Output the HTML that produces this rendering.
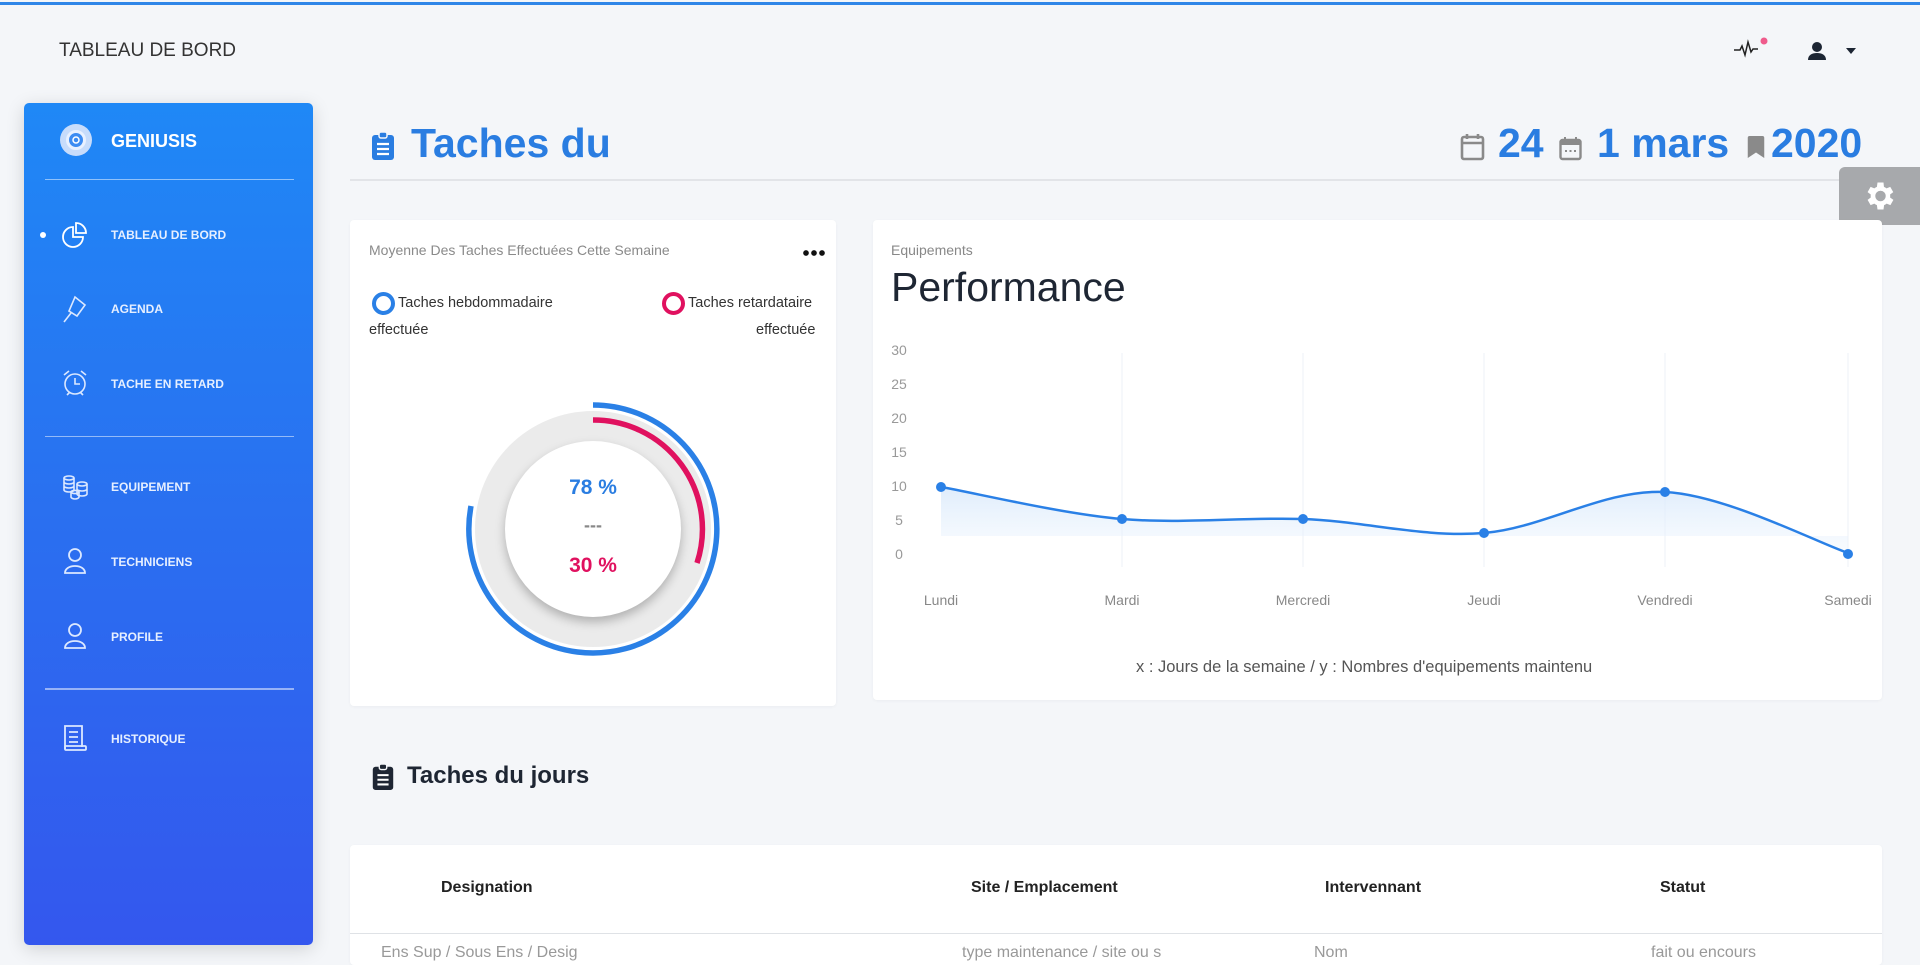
<!DOCTYPE html>
<html><head><meta charset="utf-8">
<style>
*{margin:0;padding:0;box-sizing:border-box}
body{width:1920px;height:955px;overflow:hidden;background:#f4f6f9;font-family:"Liberation Sans",Arial,sans-serif;position:relative}
.a{position:absolute}
.topline{left:0;top:2px;width:1920px;height:3px;background:#2f86e8}
.side{left:24px;top:103px;width:289px;height:842px;border-radius:5px;background:linear-gradient(180deg,#1f88f6 0%,#2a6ff0 50%,#3457ee 100%);box-shadow:0 4px 18px rgba(0,0,0,.15)}
.nav{color:#e6efff;font-size:12px;font-weight:bold;left:111px}
.div{left:45px;width:249px;height:1px;background:rgba(255,255,255,.5)}
.card{background:#fff;border-radius:4px;box-shadow:0 1px 3px rgba(0,0,0,.04)}
.big{font-weight:bold;color:#2a7de1;font-size:41px}
.xl{font-size:14px;color:#888;transform:translateX(-50%)}
.yl{font-size:14px;color:#999;left:889px;width:20px;text-align:center}
.th{font-size:16px;font-weight:bold;color:#222;top:879px}
.td{font-size:16px;color:#999;top:944px}
</style></head><body>
<div class="a topline"></div>
<div class="a" style="left:59px;top:40px;font-size:19px;color:#333">TABLEAU DE BORD</div>
<svg class="a" style="left:1733px;top:36px" width="36" height="24" viewBox="0 0 36 24"><path d="M1 14h6l2-4 3 9 3-13 3 10 2-3h5" fill="none" stroke="#222" stroke-width="1.5"/><circle cx="31" cy="5" r="3.5" fill="#ef5b8c"/></svg>
<svg class="a" style="left:1806px;top:40px" width="22" height="22" viewBox="0 0 22 22"><circle cx="11" cy="7" r="5" fill="#1c2533"/><path d="M2 20c0-5 4-7 9-7s9 2 9 7z" fill="#1c2533"/></svg>
<svg class="a" style="left:1846px;top:48px" width="10" height="6"><path d="M0 0h10L5 6z" fill="#1c2533"/></svg>

<div class="a side"></div>
<div class="a" style="left:60px;top:124px;width:32px;height:32px;border-radius:50%;background:#c7dcfb"></div>
<div class="a" style="left:66px;top:130px;width:20px;height:20px;border-radius:50%;background:#3d8cf2;border:3px solid #e9f1ff"></div>
<svg class="a" style="left:71px;top:135px" width="10" height="10" viewBox="0 0 10 10"><circle cx="5" cy="5" r="3" fill="none" stroke="#fff" stroke-width="1.5"/></svg>
<div class="a" style="left:111px;top:131px;color:#fff;font-size:18px;font-weight:bold">GENIUSIS</div>
<div class="a div" style="top:179px"></div>
<div class="a" style="left:40px;top:232px;width:6px;height:6px;border-radius:50%;background:#fff"></div>
<svg class="a" style="left:61px;top:221px" width="28" height="28" viewBox="0 0 28 28" fill="none" stroke="#fff" stroke-width="1.8"><path d="M12 6a10 10 0 1 0 10 10H12z"/><path d="M15 2v10h10A10 10 0 0 0 15 2z"/></svg>
<div class="a nav" style="top:228px">TABLEAU DE BORD</div>
<svg class="a" style="left:61px;top:294px" width="28" height="30" viewBox="0 0 28 30" fill="none" stroke="#dbe8ff" stroke-width="1.6"><path d="M14 3l10 8-8 11-8-5z"/><path d="M10 19L3 28"/></svg>
<div class="a nav" style="top:302px">AGENDA</div>
<svg class="a" style="left:61px;top:368px" width="28" height="30" viewBox="0 0 28 30" fill="none" stroke="#dbe8ff" stroke-width="1.6"><circle cx="14" cy="16" r="10"/><path d="M14 10v6h5M3 7l5-4M25 7l-5-4M6 27l3-3M22 27l-3-3"/></svg>
<div class="a nav" style="top:377px">TACHE EN RETARD</div>
<div class="a div" style="top:436px"></div>
<svg class="a" style="left:61px;top:474px" width="28" height="26" viewBox="0 0 28 26" fill="none" stroke="#dbe8ff" stroke-width="1.6"><ellipse cx="8" cy="4" rx="5" ry="2"/><path d="M3 4v12c0 1 2 2 5 2s5-1 5-2V4M3 8c0 1 2 2 5 2s5-1 5-2M3 12c0 1 2 2 5 2s5-1 5-2"/><ellipse cx="21" cy="10" rx="5" ry="2"/><path d="M16 10v10c0 1 2 2 5 2s5-1 5-2V10M16 15c0 1 2 2 5 2s5-1 5-2"/><ellipse cx="14" cy="18" rx="4" ry="1.6"/><path d="M10 18v5c0 1 2 2 4 2s4-1 4-2v-5"/></svg>
<div class="a nav" style="top:480px">EQUIPEMENT</div>
<svg class="a" style="left:63px;top:547px" width="24" height="28" viewBox="0 0 24 28" fill="none" stroke="#dbe8ff" stroke-width="1.8"><circle cx="12" cy="8" r="6"/><path d="M2 26c0-4 4-7 10-7s10 3 10 7z"/></svg>
<div class="a nav" style="top:555px">TECHNICIENS</div>
<svg class="a" style="left:63px;top:622px" width="24" height="28" viewBox="0 0 24 28" fill="none" stroke="#dbe8ff" stroke-width="1.8"><circle cx="12" cy="8" r="6"/><path d="M2 26c0-4 4-7 10-7s10 3 10 7z"/></svg>
<div class="a nav" style="top:630px">PROFILE</div>
<div class="a div" style="top:688px;height:2px"></div>
<svg class="a" style="left:62px;top:724px" width="26" height="28" viewBox="0 0 26 28" fill="none" stroke="#dbe8ff" stroke-width="1.8"><path d="M3 25V2h17v21"/><path d="M7 8h9M7 13h9M7 18h9"/><rect x="3" y="22" width="21" height="4" rx="1"/></svg>
<div class="a nav" style="top:732px">HISTORIQUE</div>

<svg class="a" style="left:372px;top:132px" width="22" height="28" viewBox="0 0 22 28"><rect x="0" y="3" width="22" height="25" rx="3" fill="#2a7de1"/><rect x="7" y="0" width="8" height="6" rx="2" fill="#2a7de1" stroke="#f4f6f9" stroke-width="1.5"/><path d="M5 12h12M5 17h12M5 22h12" stroke="#fff" stroke-width="2.2"/></svg>
<div class="a big" style="left:411px;top:120px">Taches du</div>
<div class="a" style="left:350px;top:179px;width:1570px;height:2px;background:#e2e4e8"></div>
<svg class="a" style="left:1460px;top:132px" width="25" height="29" viewBox="0 0 25 29" fill="none" stroke="#8a8a8a" stroke-width="2.6"><rect x="2" y="5" width="21" height="22" rx="2"/><path d="M2 11h21M7 2v5M18 2v5"/></svg>
<div class="a big" style="left:1498px;top:120px">24</div>
<svg class="a" style="left:1559px;top:136px" width="23" height="25" viewBox="0 0 23 25"><rect x="1.5" y="4" width="20" height="19" rx="2" fill="none" stroke="#8a8a8a" stroke-width="2.4"/><rect x="1.5" y="4" width="20" height="5" fill="#8a8a8a"/><path d="M6 1v5M17 1v5" stroke="#8a8a8a" stroke-width="2"/><path d="M6 15h2M10.5 15h2M15 15h2" stroke="#8a8a8a" stroke-width="2"/></svg>
<div class="a big" style="left:1597px;top:120px">1 mars</div>
<svg class="a" style="left:1747px;top:136px" width="18" height="22" viewBox="0 0 18 24"><path d="M0 2q0-2 2-2h14q2 0 2 2v22l-9-6-9 6z" fill="#8a8a8a"/></svg>
<div class="a big" style="left:1771px;top:120px">2020</div>
<div class="a" style="left:1839px;top:167px;width:81px;height:58px;background:#a7a9ac;border-radius:6px 0 0 6px"></div>
<svg class="a" style="left:1861px;top:178px" width="36" height="36" viewBox="0 0 24 24"><path fill="#fff" d="M19.4 13a7.5 7.5 0 0 0 0-2l2.1-1.6-2-3.5-2.5 1a7 7 0 0 0-1.7-1L15 3h-4l-.4 2.9a7 7 0 0 0-1.7 1l-2.5-1-2 3.5L6.5 11a7.5 7.5 0 0 0 0 2l-2.1 1.6 2 3.5 2.5-1a7 7 0 0 0 1.7 1L11 21h4l.4-2.9a7 7 0 0 0 1.7-1l2.5 1 2-3.5zM13 15.5a3.5 3.5 0 1 1 0-7 3.5 3.5 0 0 1 0 7z"/></svg>

<div class="a card" style="left:350px;top:220px;width:486px;height:486px"></div>
<div class="a" style="left:369px;top:242px;font-size:14px;color:#8a8a8a">Moyenne Des Taches Effectuées Cette Semaine</div>
<div class="a" style="left:803px;top:250px;width:22px;height:6px;background:radial-gradient(circle at 3px 3px,#111 2.6px,transparent 3px) 0 0/8px 6px repeat-x"></div>
<div class="a" style="left:372px;top:292px;width:23px;height:23px;border-radius:50%;border:4.5px solid #2a80e6"></div>
<div class="a" style="left:398px;top:295px;font-size:14.5px;color:#333">Taches hebdommadaire</div>
<div class="a" style="left:369px;top:322px;font-size:14.5px;color:#333">effectuée</div>
<div class="a" style="left:662px;top:292px;width:23px;height:23px;border-radius:50%;border:4.5px solid #e0115f"></div>
<div class="a" style="left:688px;top:295px;font-size:14.5px;color:#333">Taches retardataire</div>
<div class="a" style="left:756px;top:322px;font-size:14.5px;color:#333">effectuée</div>
<div class="a" style="left:475px;top:411px;width:236px;height:236px;border-radius:50%;background:#ebebeb"></div>
<div class="a" style="left:505px;top:441px;width:176px;height:176px;border-radius:50%;background:#fff;box-shadow:0 5px 10px rgba(0,0,0,.25)"></div>
<svg class="a" style="left:0;top:0" width="900" height="700" fill="none">
<path d="M593 405A124 124 0 1 1 471 506" stroke="#2a80e6" stroke-width="5.5"/>
<path d="M593 420A109 109 0 0 1 697 563" stroke="#e0115f" stroke-width="5.5"/>
</svg>
<div class="a" style="left:543px;top:476px;width:100px;text-align:center;font-size:21px;font-weight:bold;color:#2a7de1">78 %</div>
<div class="a" style="left:543px;top:515px;width:100px;text-align:center;font-size:18px;font-weight:bold;color:#888">---</div>
<div class="a" style="left:543px;top:554px;width:100px;text-align:center;font-size:21px;font-weight:bold;color:#e0115f">30 %</div>

<div class="a card" style="left:873px;top:220px;width:1009px;height:480px"></div>
<div class="a" style="left:891px;top:242px;font-size:14px;color:#888">Equipements</div>
<div class="a" style="left:891px;top:264px;font-size:41px;color:#1e2633">Performance</div>
<div class="a yl" style="top:342px">30</div>
<div class="a yl" style="top:376px">25</div>
<div class="a yl" style="top:410px">20</div>
<div class="a yl" style="top:444px">15</div>
<div class="a yl" style="top:478px">10</div>
<div class="a yl" style="top:512px">5</div>
<div class="a yl" style="top:546px">0</div>
<svg class="a" style="left:0;top:0" width="1920" height="700">
<defs><linearGradient id="g" x1="0" y1="0" x2="0" y2="1"><stop offset="0" stop-color="#d7e8fb" stop-opacity=".8"/><stop offset="1" stop-color="#eef5fd" stop-opacity=".4"/></linearGradient></defs>
<g stroke="#edf1f7" stroke-width="1"><path d="M1122 353V567M1303 353V567M1484 353V567M1665 353V567M1848 353V567"/></g>
<path d="M941 487C971 492 1062 514 1122 519C1182 524 1243 517 1303 519C1363 521 1424 538 1484 533C1544 528 1604 489 1665 492C1726 495 1818 543 1848 553V536H941Z" fill="url(#g)"/>
<path d="M941 487C971 492 1062 514 1122 519C1182 524 1243 517 1303 519C1363 521 1424 538 1484 533C1544 528 1604 489 1665 492C1726 495 1818 543 1848 553" fill="none" stroke="#2a80e6" stroke-width="2.5"/>
<g fill="#2a80e6"><circle cx="941" cy="487" r="5"/><circle cx="1122" cy="519" r="5"/><circle cx="1303" cy="519" r="5"/><circle cx="1484" cy="533" r="5"/><circle cx="1665" cy="492" r="5"/><circle cx="1848" cy="554" r="5"/></g>
</svg>
<div class="a xl" style="left:941px;top:592px">Lundi</div>
<div class="a xl" style="left:1122px;top:592px">Mardi</div>
<div class="a xl" style="left:1303px;top:592px">Mercredi</div>
<div class="a xl" style="left:1484px;top:592px">Jeudi</div>
<div class="a xl" style="left:1665px;top:592px">Vendredi</div>
<div class="a xl" style="left:1848px;top:592px">Samedi</div>
<div class="a" style="left:1136px;top:658px;font-size:16.5px;color:#555">x : Jours de la semaine / y : Nombres d'equipements maintenu</div>

<svg class="a" style="left:372px;top:764px" width="22" height="26" viewBox="0 0 22 28"><rect x="0" y="3" width="22" height="25" rx="3" fill="#1e2633"/><rect x="7" y="0" width="8" height="6" rx="2" fill="#1e2633" stroke="#f4f6f9" stroke-width="1.5"/><path d="M5 12h12M5 17h12M5 22h12" stroke="#fff" stroke-width="2.2"/></svg>
<div class="a" style="left:407px;top:762px;font-size:24px;font-weight:bold;color:#1e2633">Taches du jours</div>
<div class="a card" style="left:350px;top:845px;width:1532px;height:120px"></div>
<div class="a th" style="left:441px">Designation</div>
<div class="a th" style="left:971px">Site / Emplacement</div>
<div class="a th" style="left:1325px">Intervennant</div>
<div class="a th" style="left:1660px">Statut</div>
<div class="a" style="left:350px;top:933px;width:1532px;height:1px;background:#dfe2e6"></div>
<div class="a td" style="left:381px">Ens Sup / Sous Ens / Desig</div>
<div class="a td" style="left:962px">type maintenance / site ou s</div>
<div class="a td" style="left:1314px">Nom</div>
<div class="a td" style="left:1651px">fait ou encours</div>
</body></html>
